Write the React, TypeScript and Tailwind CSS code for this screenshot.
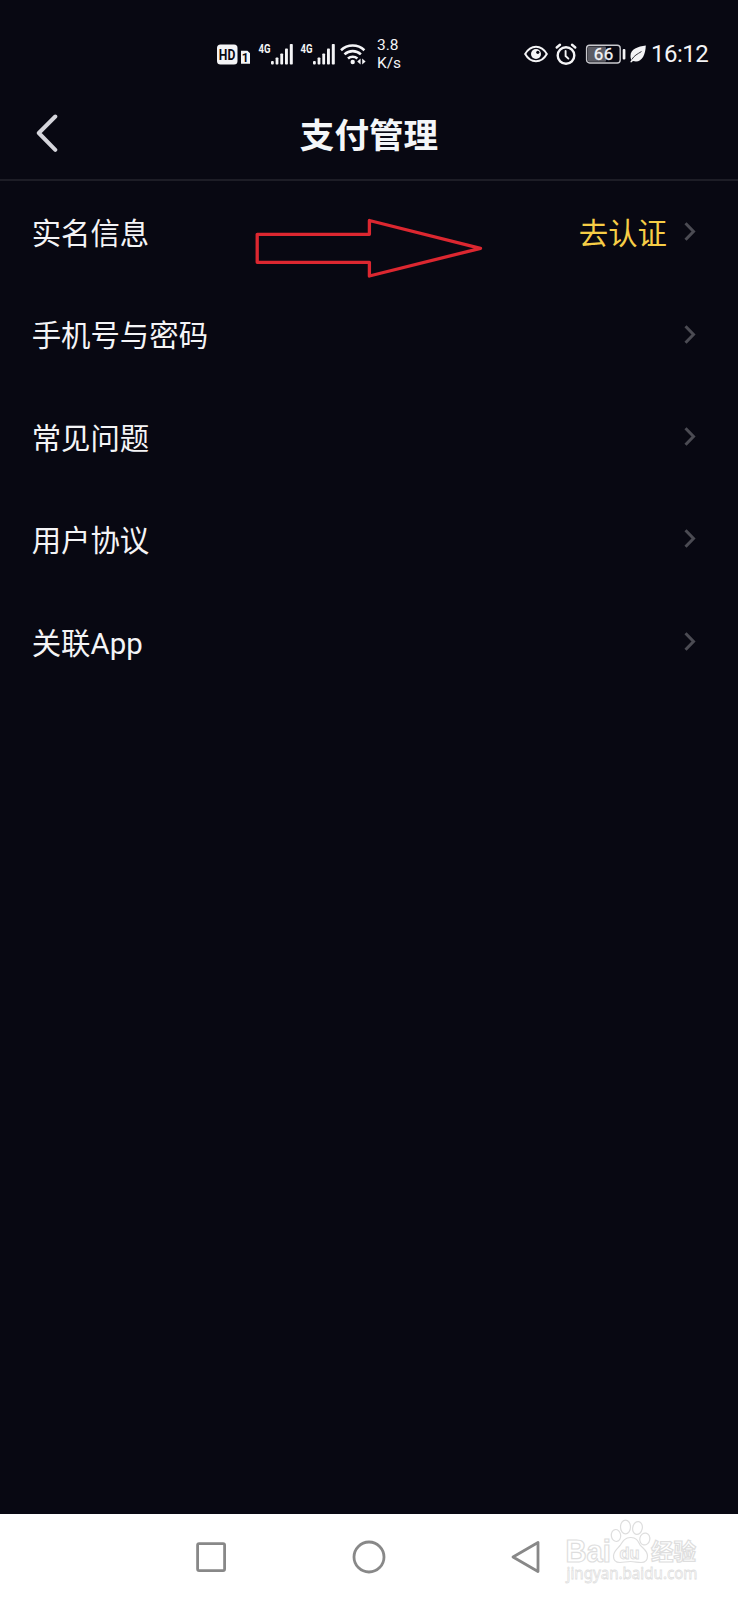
import { ReactNode } from "react";

const menuItems = [
  { label: "实名信息", action: "去认证" },
  { label: "手机号与密码" },
  { label: "常见问题" },
  { label: "用户协议" },
  { label: "关联App" },
];

function Signal({ className }: { className: string }) {
  return (
    <svg width="37" height="28" viewBox="-1 -2 37 28" className={className} fill="#f4f4f6">
      <text x="-0.5" y="10.5" fontSize="13" fontWeight="700" fontFamily="Roboto, sans-serif" textLength="12" lengthAdjust="spacingAndGlyphs">
        4G
      </text>
      <rect x="12" y="19" width="2.8" height="3.6" rx="1" />
      <rect x="16.6" y="15.5" width="2.8" height="7.1" rx="0.8" />
      <rect x="21.3" y="11.5" width="2.8" height="11.1" rx="0.8" />
      <rect x="26" y="6.5" width="2.9" height="16.1" rx="0.8" />
      <rect x="30.8" y="2" width="3" height="20.6" rx="0.8" />
    </svg>
  );
}

function StatusBar() {
  return (
    <div className="flex h-[89px] items-center pt-[18px] pl-[216px] text-[#f4f4f6]">
      {/* HD + sim number */}
      <svg width="35" height="24" viewBox="0 0 35 24" className="shrink-0">
        <rect x="1" y="2.5" width="20.5" height="20" rx="3.5" fill="#f4f4f6" />
        <text x="2.8" y="17.8" fontSize="15" fontWeight="700" fill="#080812" fontFamily="Roboto, sans-serif" textLength="16.5" lengthAdjust="spacingAndGlyphs">
          HD
        </text>
        <path d="M25 8.8h6.4l2.6 2.4v10.6H25z" fill="#f4f4f6" />
        <text x="25.8" y="19.8" fontSize="12" fontWeight="700" fill="#080812" fontFamily="Roboto, sans-serif">
          1
        </text>
      </svg>

      <Signal className="ml-[7px] shrink-0" />
      <Signal className="ml-[5px] shrink-0" />

      {/* Wifi */}
      <svg width="28" height="24" viewBox="0 0 28 24" className="ml-[3px] shrink-0" fill="none" stroke="#f4f4f6" strokeWidth="2.6">
        <path d="M1 8.2a17 17 0 0 1 23.4 0" />
        <path d="M4.5 12.4a12 12 0 0 1 16.4 0" />
        <path d="M8 16.5a7 7 0 0 1 9.4 0" />
        <circle cx="12.7" cy="20" r="2.2" fill="#f4f4f6" stroke="none" />
        <path d="M20.6 16.6v6l-3.4-3zM22.2 16.6v6l3.4-3z" fill="#f4f4f6" stroke="none" />
      </svg>

      <div className="ml-[9px] w-[26px] shrink-0 pt-px text-[15.5px] leading-[18.5px]">
        <div>3.8</div>
        <div>K/s</div>
      </div>

      {/* Eye */}
      <svg width="24" height="24" viewBox="0 0 24 24" className="ml-[121px] shrink-0" fill="none" stroke="#f4f4f6">
        <path d="M1.2 12C4 7 8 4.7 12 4.7S20 7 22.8 12C20 17 16 19.3 12 19.3S4 17 1.2 12z" strokeWidth="2" />
        <circle cx="12" cy="12" r="5" fill="#f4f4f6" stroke="none" />
        <circle cx="13.8" cy="10.3" r="1.6" fill="#080812" stroke="none" />
      </svg>

      {/* Alarm */}
      <svg width="22" height="24" viewBox="0 0 22 24" className="ml-[7px] shrink-0" fill="none" stroke="#f4f4f6" strokeWidth="2.4" strokeLinecap="round">
        <circle cx="11" cy="13.5" r="8.3" />
        <path d="M1.7 5.5 5 2.8M20.3 5.5 17 2.8" />
        <path d="M10.6 9v5l2.8 2.6" strokeWidth="1.9" />
      </svg>

      {/* Battery */}
      <svg width="42" height="24" viewBox="0 0 42 24" className="ml-[8px] shrink-0">
        <rect x="3" y="4.5" width="18" height="15.2" rx="1" fill="#5c5c64" />
        <rect x="1.6" y="3.2" width="33.6" height="17.8" rx="3" fill="none" stroke="#c9c9ce" strokeWidth="1.4" />
        <rect x="37.7" y="7" width="2.7" height="10.5" rx="1" fill="#f4f4f6" />
        <text x="8.8" y="18" fontSize="17" fill="#f4f4f6" stroke="#f4f4f6" strokeWidth="0.3" fontFamily="Roboto, sans-serif" textLength="19.5">
          66
        </text>
      </svg>

      {/* Leaf */}
      <svg width="18" height="24" viewBox="0 0 18 24" className="ml-[2px] shrink-0">
        <path d="M16.8 3.5C9 4.5 1.5 7 1.5 14c0 1.8.4 3 1 4L1.2 19.9l1 .7L4 19C12 21.5 16.5 14 16.8 3.5z" fill="#f4f4f6" />
        <path d="M2.8 17.5C5.3 13.4 8.2 12.2 12.5 9.5" fill="none" stroke="#080812" strokeWidth="0.8" />
      </svg>

      <div className="ml-[4px] shrink-0 pt-px text-[24px] leading-6 tracking-[-0.5px]">16:12</div>
    </div>
  );
}

function Header() {
  return (
    <header className="grid h-[92px] grid-cols-[1fr_auto_1fr] items-center border-b-2 border-[#1d1d26]">
      <svg width="24" height="40" viewBox="0 0 24 40" className="ml-[35px]" fill="none" stroke="#d5d5dc" strokeWidth="4" strokeLinecap="round" strokeLinejoin="round">
        <path d="M20.3 2.5 3.8 19l16.5 16.8" />
      </svg>
      <h1 className="pt-1 text-[34.6px] leading-none font-bold text-[#f4f6f8]">支付管理</h1>
    </header>
  );
}

function MenuRow({ label, action }: { label: string; action?: string }) {
  return (
    <div className="flex h-[102.4px] items-center pr-[41px] pl-[31.7px] text-[29.4px] leading-none">
      <span className="pt-[5px] text-[#f4f4f6]">{label}</span>
      <span className="ml-auto pt-[5px] text-[#f6cd46]">{action}</span>
      <svg width="12" height="20" viewBox="0 0 12 20" className="mr-px ml-[17px]" fill="none" stroke="#4b4b53" strokeWidth="3">
        <path d="m1.5 1.3 8 8.2-8 8.2" />
      </svg>
    </div>
  );
}

function NavIcon({ className, children }: { className: string; children: ReactNode }) {
  return (
    <svg width="36" height="36" viewBox="0 0 36 36" className={className} fill="none" stroke="#888" strokeWidth="2.8" strokeLinejoin="round">
      {children}
    </svg>
  );
}

function Watermark() {
  return (
    <svg width="150" height="84" viewBox="0 0 150 84" className="absolute top-[1px] left-[560px]" fill="#fff" stroke="#dedede" strokeWidth="1.2">
      <g fontFamily="'Liberation Sans', sans-serif" fontWeight="700">
        <text x="5.5" y="46.5" fontSize="31" textLength="45.5" lengthAdjust="spacingAndGlyphs">Bai</text>
        <path d="M70.5 22.5c-5.8 0-7.8 4-10.2 7.7-2.3 3.2-6.8 5.5-6.8 11 0 4 2.5 6.3 6.5 6.3 3.8 0 6.3-1 10.5-1s7 1 10.5 1c4.2 0 6.5-2.5 6.5-6.5 0-5.5-4.7-7.6-7.5-11.2-1.9-3.3-3.2-7.3-9-7.3z" />
        <ellipse cx="56" cy="20.5" rx="4.7" ry="6" transform="rotate(-8 56 20.5)" />
        <ellipse cx="65.5" cy="12" rx="5" ry="6.8" />
        <ellipse cx="77.5" cy="13" rx="4.8" ry="6.5" transform="rotate(12 77.5 13)" />
        <ellipse cx="84.8" cy="24" rx="5" ry="6" transform="rotate(12 84.8 24)" />
        <text x="59.5" y="43.8" fontSize="17" textLength="20" lengthAdjust="spacingAndGlyphs" strokeWidth="1">du</text>
        <text x="91" y="45" fontSize="22.5" textLength="45" fontFamily="'Noto Sans CJK SC', sans-serif">经验</text>
      </g>
      <text x="6.5" y="64.3" fontSize="17" fontFamily="'Noto Sans', sans-serif" textLength="131" lengthAdjust="spacingAndGlyphs" strokeWidth="0.8">
        jingyan.baidu.com
      </text>
    </svg>
  );
}

export default function App() {
  return (
    <div className="relative flex h-[1600px] w-[738px] flex-col overflow-hidden bg-[#080812] font-[Roboto,'Noto_Sans_CJK_SC',sans-serif]">
      <StatusBar />
      <Header />

      <main className="flex-1">
        {menuItems.map((item) => (
          <MenuRow key={item.label} {...item} />
        ))}
      </main>

      {/* Pointer to the verify link */}
      <svg width="232" height="64" viewBox="0 0 232 64" className="absolute top-[216px] left-[254px]" fill="none" stroke="#dc2730" strokeWidth="3.3">
        <path d="M3.2 18.3H115.4V4.5L226.5 32.3 115.4 60V46.3H3.2z" strokeLinejoin="round" />
      </svg>

      <nav className="relative flex h-[86px] items-center bg-white">
        <NavIcon className="ml-[193px]">
          <rect x="4.6" y="4.6" width="27" height="27" rx="1.5" />
        </NavIcon>
        <NavIcon className="ml-[122px]">
          <circle cx="18" cy="18" r="15" />
        </NavIcon>
        <NavIcon className="ml-[121px]">
          <path d="M30 3.5v29L5 18z" />
        </NavIcon>
        <Watermark />
      </nav>
    </div>
  );
}
